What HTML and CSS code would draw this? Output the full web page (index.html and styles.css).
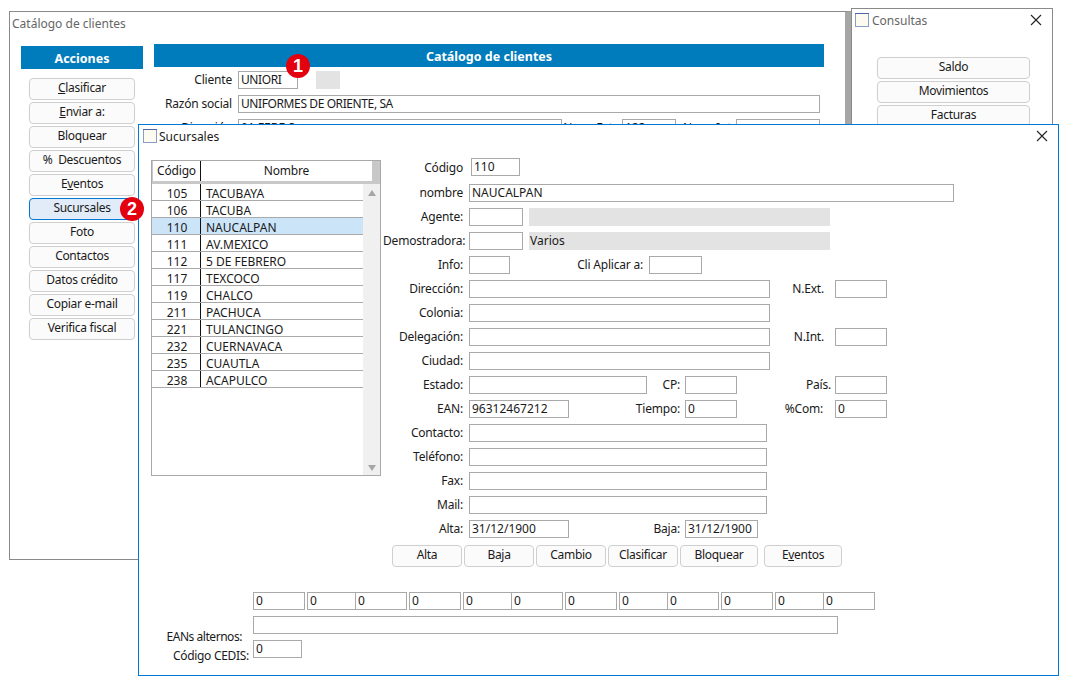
FILE: index.html
```html
<!DOCTYPE html>
<html lang="es">
<head>
  <meta charset="UTF-8">
  <title>Catálogo de clientes</title>
  <link rel="stylesheet" href="styles.css">
</head>
<body>
  <div class="window win-main">
    <div class="win-title">Catálogo de clientes</div>
    <div class="main-body">
      <div class="actions">
        <div class="band">Acciones</div>
        <div class="btn-list">
          <button><u>C</u>lasificar</button>
          <button><u>E</u>nviar a:</button>
          <button>Bloquear</button>
          <button>%&nbsp; Descuentos</button>
          <button>E<u>v</u>entos</button>
          <button class="active">Sucursales</button>
          <button>Foto</button>
          <button>Contactos</button>
          <button>Datos crédito</button>
          <button>Copiar e-mail</button>
          <button>Verifica fiscal</button>
        </div>
      </div>
      <div class="client">
        <div class="band">Catálogo de clientes</div>
        <div class="client-rows">
          <div class="client-row">
            <label>Cliente</label>
            <input class="w60 tight" value="UNIORI">
            <span class="gray-box"></span>
          </div>
          <div class="client-row">
            <label>Razón social</label>
            <input class="w582 tight" value="UNIFORMES DE ORIENTE, SA">
          </div>
          <div class="client-row">
            <label>Dirección</label>
            <input class="w324" value="91 FEBE S">
            <label class="lbl-ext">Num. Ext.</label>
            <input class="w54" value="123">
            <label class="lbl-int">Num. Int.</label>
            <input class="w84">
          </div>
        </div>
      </div>
    </div>
  </div>

  <div class="window win-consultas">
    <div class="win-title">
      <svg class="win-icon" viewBox="0 0 14 14"><rect x="0.5" y="0.5" width="13" height="13" fill="#fdfbf0" stroke="#8a9ccc"/><path d="M0 0.5h14" stroke="#5068aa"/></svg>
      <span>Consultas</span>
      <svg class="win-close" viewBox="0 0 12 12"><path d="M1 1l10 10M11 1L1 11" stroke="#222" stroke-width="1.1" fill="none"/></svg>
    </div>
    <div class="btn-list consultas-list">
      <button>Saldo</button>
      <button>Movimientos</button>
      <button>Facturas</button>
    </div>
  </div>

  <div class="window win-suc">
    <div class="win-title dark">
      <svg class="win-icon" viewBox="0 0 14 14"><rect x="0.5" y="0.5" width="13" height="13" fill="#fdfbf0" stroke="#8a9ccc"/><path d="M0 0.5h14" stroke="#5068aa"/></svg>
      <span>Sucursales</span>
      <svg class="win-close" viewBox="0 0 12 12"><path d="M1 1l10 10M11 1L1 11" stroke="#222" stroke-width="1.1" fill="none"/></svg>
    </div>

    <div class="suc-top">
      <div class="grid">
        <div class="grid-head">
          <div class="col-code">Código</div>
          <div class="col-name">Nombre</div>
        </div>
        <div class="grid-body">
          <div class="grid-rows">
            <div class="grid-row"><div class="col-code">105</div><div class="col-name">TACUBAYA</div></div>
            <div class="grid-row"><div class="col-code">106</div><div class="col-name">TACUBA</div></div>
            <div class="grid-row selected"><div class="col-code">110</div><div class="col-name">NAUCALPAN</div></div>
            <div class="grid-row"><div class="col-code">111</div><div class="col-name">AV.MEXICO</div></div>
            <div class="grid-row"><div class="col-code">112</div><div class="col-name">5 DE FEBRERO</div></div>
            <div class="grid-row"><div class="col-code">117</div><div class="col-name">TEXCOCO</div></div>
            <div class="grid-row"><div class="col-code">119</div><div class="col-name">CHALCO</div></div>
            <div class="grid-row"><div class="col-code">211</div><div class="col-name">PACHUCA</div></div>
            <div class="grid-row"><div class="col-code">221</div><div class="col-name">TULANCINGO</div></div>
            <div class="grid-row"><div class="col-code">232</div><div class="col-name">CUERNAVACA</div></div>
            <div class="grid-row"><div class="col-code">235</div><div class="col-name">CUAUTLA</div></div>
            <div class="grid-row"><div class="col-code">238</div><div class="col-name">ACAPULCO</div></div>
          </div>
          <div class="scrollbar">
            <span class="arrow-up"></span>
            <span class="arrow-down"></span>
          </div>
        </div>
      </div>

      <div class="form">
        <div class="row row-code"><label class="lbl">Código</label><input class="w49" value="110"></div>
        <div class="row"><label class="lbl">nombre</label><input class="w485" value="NAUCALPAN"></div>
        <div class="row"><label class="lbl">Agente:</label><input class="w54"><span class="gray-field"></span></div>
        <div class="row"><label class="lbl">Demostradora:</label><input class="w54"><span class="gray-field">Varios</span></div>
        <div class="row"><label class="lbl">Info:</label><input class="w41"><label class="lbl-cli">Cli Aplicar a:</label><input class="w53"></div>
        <div class="row"><label class="lbl">Dirección:</label><input class="w301"><label class="lbl-n">N.Ext.</label><input class="w52"></div>
        <div class="row"><label class="lbl">Colonia:</label><input class="w301"></div>
        <div class="row"><label class="lbl">Delegación:</label><input class="w301"><label class="lbl-n">N.Int.</label><input class="w52"></div>
        <div class="row"><label class="lbl">Ciudad:</label><input class="w301"></div>
        <div class="row"><label class="lbl">Estado:</label><input class="w178"><label class="lbl-cp">CP:</label><input class="w52"><label class="lbl-pais">País.</label><input class="w52"></div>
        <div class="row"><label class="lbl">EAN:</label><input class="w100" value="96312467212"><label class="lbl-mid">Tiempo:</label><input class="w52" value="0"><label class="lbl-com">%Com:</label><input class="w52" value="0"></div>
        <div class="row"><label class="lbl">Contacto:</label><input class="w298"></div>
        <div class="row"><label class="lbl">Teléfono:</label><input class="w298"></div>
        <div class="row"><label class="lbl">Fax:</label><input class="w298"></div>
        <div class="row"><label class="lbl">Mail:</label><input class="w298"></div>
        <div class="row"><label class="lbl">Alta:</label><input class="w100" value="31/12/1900"><label class="lbl-mid">Baja:</label><input class="w73" value="31/12/1900"></div>
        <div class="form-buttons">
          <button>Alta</button>
          <button>Baja</button>
          <button>Cambio</button>
          <button>Clasificar</button>
          <button class="btn-wide">Bloquear</button>
          <button class="btn-wide btn-last">E<u>v</u>entos</button>
        </div>
      </div>
    </div>

    <div class="eans">
      <div class="ean-boxes">
        <div class="ean-group"><input class="e52" value="0"></div>
        <div class="ean-group"><input class="e50" value="0"><input class="e51" value="0"></div>
        <div class="ean-group"><input class="e52" value="0"></div>
        <div class="ean-group"><input class="e50" value="0"><input class="e51" value="0"></div>
        <div class="ean-group"><input class="e52" value="0"></div>
        <div class="ean-group"><input class="e50" value="0"><input class="e51" value="0"></div>
        <div class="ean-group"><input class="e52" value="0"></div>
        <div class="ean-group"><input class="e50" value="0"><input class="e51" value="0"></div>
      </div>
      <div class="ean-row">
        <label class="lbl-ean">EANs alternos:</label>
        <input class="w585">
      </div>
      <div class="ean-row ean-cedis">
        <label class="lbl-cedis">Código CEDIS:</label>
        <input class="w49" value="0">
      </div>
    </div>
  </div>

  <span class="badge badge-1">1</span>
  <span class="badge badge-2">2</span>
</body>
</html>
```

FILE: styles.css
```css
body {
  margin: 0;
  width: 1072px;
  height: 690px;
  position: relative;
  overflow: hidden;
  background-color: white;
  font-family: "Noto Sans", "Liberation Sans", sans-serif;
  font-size: 12px;
  color: #1a1a1a;
}

input, button {
  font-family: inherit;
  font-size: 12px;
  color: #1a1a1a;
}

input {
  box-sizing: border-box;
  height: 18px;
  padding: 0 2px 2px;
  margin: 0;
  border: 1px solid #a9a9a9;
  border-radius: 0;
  background-color: white;
  line-height: 14px;
  flex: none;
}

input.tight {
  letter-spacing: -0.4px;
}

label {
  white-space: nowrap;
  text-align: right;
  line-height: 16px;
  letter-spacing: -0.2px;
  flex: none;
}

button {
  box-sizing: border-box;
  height: 22px;
  padding: 0 0 3px;
  border: 1px solid #cfcfcf;
  border-radius: 4px;
  background-color: #fbfbfb;
  letter-spacing: -0.3px;
}

button.active {
  border-color: #0078d7;
  background-color: #e1ecf8;
}

/* windows */
.window {
  position: absolute;
  box-sizing: border-box;
  background-color: white;
  border: 1px solid #8a8a8a;
}

.win-main {
  left: 9px;
  top: 11px;
  width: 842px;
  height: 549px;
  border-right: 6px solid #a6a6a6;
}

.win-consultas {
  left: 851px;
  top: 8px;
  width: 202px;
  height: 200px;
}

.win-suc {
  left: 138px;
  top: 124px;
  width: 921px;
  height: 552px;
  border-color: #0078d7;
}

.win-title {
  display: flex;
  align-items: center;
  height: 24px;
  padding-left: 2px;
  padding-bottom: 1px;
  box-sizing: border-box;
  color: #666;
}

.win-title.dark {
  color: #1a1a1a;
}

.win-consultas .win-title {
  padding-left: 3px;
  padding-bottom: 2px;
}

.win-suc .win-title {
  padding-left: 4px;
  padding-bottom: 2px;
}

.win-icon {
  width: 14px;
  height: 14px;
  margin-right: 2px;
}

.win-consultas .win-icon {
  margin-right: 3px;
}

.win-close {
  width: 12px;
  height: 12px;
  margin-left: auto;
  margin-right: 10px;
}

/* main window */
.main-body {
  display: flex;
  align-items: flex-start;
  padding: 8px 0 0 11px;
}

.actions {
  width: 122px;
  margin-top: 2px;
  margin-right: 11px;
}

.band {
  height: 23px;
  background-color: #007bbb;
  color: white;
  font-weight: bold;
  font-size: 12.5px;
  line-height: 25px;
  text-align: center;
}

.btn-list {
  display: flex;
  flex-direction: column;
  gap: 2px;
  width: 106px;
  margin: 9px 0 0 8px;
}

.client {
  width: 670px;
}

.client-rows {
  display: flex;
  flex-direction: column;
  gap: 6px;
  margin-top: 4px;
}

.client-row {
  display: flex;
  align-items: center;
  height: 18px;
}

.client-row label:first-child {
  width: 78px;
  margin-right: 6px;
}

.gray-box {
  width: 24px;
  height: 18px;
  margin-left: 18px;
  background-color: #e3e3e3;
}

.lbl-ext {
  width: 54px;
  margin-right: 6px;
}

.lbl-int {
  width: 53px;
  padding-left: 7px;
  text-align: left;
}

.w60 { width: 60px; }
.w582 { width: 582px; }
.w324 { width: 324px; }
.w54 { width: 54px; }
.w84 { width: 84px; }
.w49 { width: 49px; }
.w485 { width: 485px; }
.w41 { width: 41px; }
.w53 { width: 53px; }
.w301 { width: 301px; }
.w52 { width: 52px; }
.w178 { width: 178px; }
.w100 { width: 100px; }
.w298 { width: 298px; }
.w73 { width: 73px; }
.w585 { width: 585px; }

/* consultas */
.consultas-list {
  width: 153px;
  margin: 24px 0 0 25px;
}

/* sucursales */
.suc-top {
  display: flex;
  align-items: flex-start;
  padding: 11px 0 0 12px;
}

.grid {
  box-sizing: border-box;
  width: 230px;
  height: 316px;
  border: 1px solid #a9a9a9;
}

.grid-head {
  display: flex;
  box-sizing: border-box;
  height: 23px;
  border: solid #c8c8c8;
  border-width: 0 8px 3px 1px;
  line-height: 19px;
  letter-spacing: -0.2px;
}

.col-code {
  box-sizing: border-box;
  width: 49px;
  flex: none;
  text-align: center;
  border-right: 1px solid #111;
}

.col-name {
  flex: 1;
}

.grid-head .col-name {
  text-align: center;
}

.grid-head .col-code {
  width: 48px;
}

.grid-body {
  display: flex;
  height: 291px;
}

.grid-rows {
  width: 211px;
}

.grid-row {
  display: flex;
  box-sizing: border-box;
  height: 17px;
  border-bottom: 1px solid #a9a9a9;
  line-height: 19px;
}

.grid-row .col-code {
  padding-left: 2px;
}

.grid-row.selected {
  background-color: #cce4f8;
}

.grid-row .col-name {
  padding-left: 5px;
}

.scrollbar {
  flex: 1;
  display: flex;
  flex-direction: column;
  justify-content: space-between;
  align-items: center;
  padding: 6px 0 4px;
  background-color: #f0f0f0;
}

.arrow-up {
  border: solid transparent;
  border-width: 0 4px 6px;
  border-bottom-color: #a6a6a6;
}

.arrow-down {
  border: solid transparent;
  border-width: 6px 4px 0;
  border-top-color: #a6a6a6;
}

.form {
  display: flex;
  flex-direction: column;
  gap: 6px;
  margin-left: 2px;
  margin-top: -2px;
}

.row {
  display: flex;
  align-items: center;
  height: 18px;
}

.row-code {
  margin-bottom: 2px;
}

.row-code label {
  padding-top: 2px;
}

.row-code input {
  margin-left: 2px;
}

.lbl {
  width: 80px;
  margin-right: 6px;
}

.gray-field {
  box-sizing: border-box;
  width: 301px;
  height: 18px;
  margin-left: 6px;
  padding-left: 1px;
  background-color: #e3e3e3;
  line-height: 18px;
}

.lbl-cli {
  width: 133px;
  margin-right: 6px;
}

.lbl-n {
  width: 54px;
  margin-right: 11px;
}

.lbl-cp {
  width: 33px;
  margin-right: 5px;
}

.lbl-pais {
  width: 94px;
  margin-right: 4px;
}

.lbl-mid {
  width: 111px;
  margin-right: 5px;
}

.lbl-com {
  width: 86px;
  margin-right: 12px;
}

.form-buttons {
  display: flex;
  gap: 2px;
  margin: 1px 0 0 9px;
}

.form-buttons button {
  width: 70px;
}

.form-buttons .btn-wide {
  width: 78px;
}

.form-buttons .btn-last {
  margin-left: 4px;
}

.eans {
  padding-left: 114px;
  margin-top: 25px;
}

.ean-boxes {
  display: flex;
  gap: 2px;
}

.ean-group {
  display: flex;
}

.ean-group input + input {
  border-left: none;
}

.e52 { width: 52px; }
.e50 { width: 49px; }
.e51 { width: 51px; }

.ean-row {
  display: flex;
  align-items: flex-start;
  height: 18px;
  margin-top: 6px;
  position: relative;
}

.lbl-ean {
  position: absolute;
  right: 100%;
  top: 13px;
  margin-right: 11px;
  letter-spacing: -0.45px;
}

.lbl-cedis {
  position: absolute;
  right: 100%;
  top: 8px;
  margin-right: 4px;
  letter-spacing: -0.3px;
}

/* numbered callouts */
.badge {
  position: absolute;
  width: 24px;
  height: 24px;
  border-radius: 50%;
  background-color: #e3000f;
  color: white;
  font-family: "Liberation Sans", sans-serif;
  font-weight: bold;
  font-size: 18px;
  line-height: 24px;
  text-align: center;
}

.badge-1 {
  left: 286px;
  top: 54px;
}

.badge-2 {
  left: 120px;
  top: 197px;
}
```
